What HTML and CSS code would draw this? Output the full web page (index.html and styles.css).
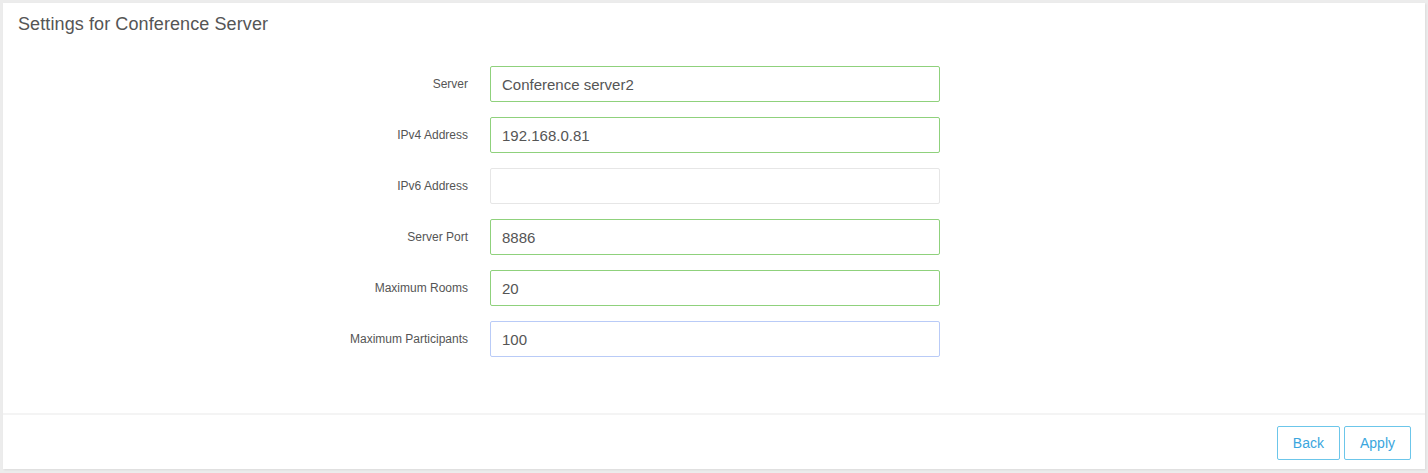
FILE: index.html
```html
<!DOCTYPE html>
<html>
<head>
<meta charset="utf-8">
<link rel="stylesheet" href="styles.css">
</head>
<body>
<div class="card">
  <div class="card-header">Settings for Conference Server</div>
  <div class="card-body">
    <div class="row">
      <label class="label">Server</label>
      <div class="input ok">Conference server2</div>
    </div>
    <div class="row">
      <label class="label">IPv4 Address</label>
      <div class="input ok">192.168.0.81</div>
    </div>
    <div class="row">
      <label class="label">IPv6 Address</label>
      <div class="input"></div>
    </div>
    <div class="row">
      <label class="label">Server Port</label>
      <div class="input ok">8886</div>
    </div>
    <div class="row">
      <label class="label">Maximum Rooms</label>
      <div class="input ok">20</div>
    </div>
    <div class="row">
      <label class="label">Maximum Participants</label>
      <div class="input focus">100</div>
    </div>
  </div>
  <div class="card-footer">
    <button class="btn">Back</button>
    <button class="btn">Apply</button>
  </div>
</div>
</body>
</html>
```
FILE: styles.css
```css
html, body {
  margin: 0;
  padding: 0;
  background: #ececec;
  font-family: "Liberation Sans", Arial, sans-serif;
}
body {
  padding: 3px 3px 4px 3px;
  height: 473px;
  box-sizing: border-box;
}
.card {
  background: #fff;
  height: 466px;
  display: flex;
  flex-direction: column;
  box-shadow: 1px 1px 2px rgba(0,0,0,0.08);
}
.card-header {
  font-size: 18px;
  letter-spacing: 0.1px;
  color: #555;
  padding: 11px 15px 0 15px;
  height: 52px;
  box-sizing: border-box;
}
.card-body {
  flex: 1;
  display: flex;
  flex-direction: column;
  gap: 15px;
  padding-top: 11px;
}
.row {
  display: flex;
  align-items: center;
  gap: 22px;
}
.label {
  width: 465px;
  text-align: right;
  font-size: 12px;
  color: #555;
}
.input {
  width: 450px;
  height: 36px;
  box-sizing: border-box;
  border: 1px solid #e6e6e6;
  border-radius: 2px;
  padding: 0 11px;
  display: flex;
  align-items: center;
  font-size: 15px;
  color: #555;
}
.input.ok {
  border-color: #8fd17c;
}
.input.focus {
  border-color: #b9cbf7;
}
.card-footer {
  border-top: 2px solid #f4f4f4;
  height: 56px;
  box-sizing: border-box;
  display: flex;
  justify-content: flex-end;
  align-items: flex-start;
  gap: 4px;
  padding: 11px 14px 0 0;
}
.btn {
  font-family: "Liberation Sans", Arial, sans-serif;
  font-size: 14px;
  color: #3aa6de;
  background: #fff;
  border: 1px solid #6cc6ea;
  border-radius: 2px;
  height: 34px;
  padding: 0 15px;
  cursor: pointer;
}
```
